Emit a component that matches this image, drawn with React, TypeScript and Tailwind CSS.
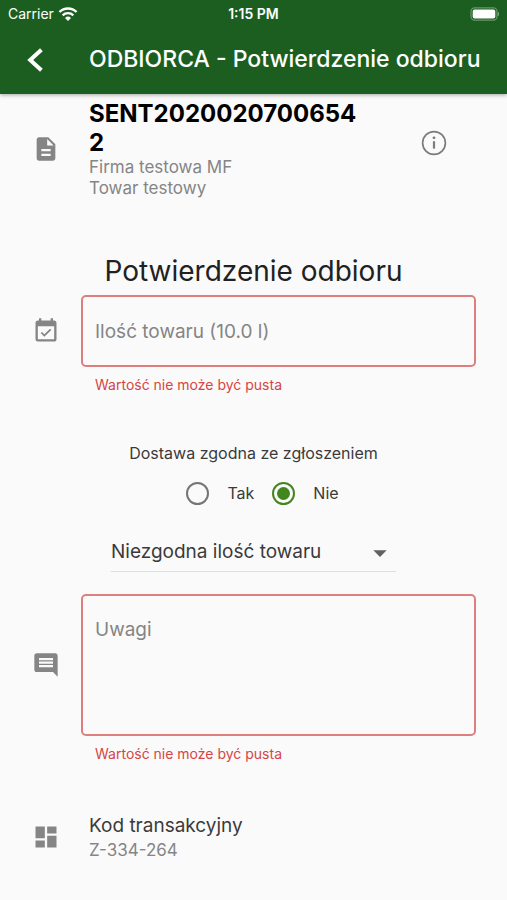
import React, { useState } from "react";
import clsx from "clsx";
import {
  MdArrowDropDown,
  MdComment,
  MdDashboard,
  MdDescription,
  MdEventAvailable,
} from "react-icons/md";

const StatusBar: React.FC = () => {
  return (
    <div className="grid h-7 grid-cols-3 items-center px-2 text-sm">
      <div className="flex items-center gap-1">
        <span>Carrier</span>
        <svg viewBox="0 0 18 14" className="h-4 w-5" fill="none">
          <path
            d="M1.3 5.2a11 11 0 0 1 15.4 0M4.2 8.2a6.9 6.9 0 0 1 9.6 0"
            stroke="currentColor"
            strokeWidth="2.1"
          />
          <path d="M9 13.2 6.3 10.5a3.9 3.9 0 0 1 5.4 0Z" fill="currentColor" />
        </svg>
      </div>
      <span className="text-center font-semibold">1:15 PM</span>
      <svg viewBox="0 0 29 14" className="h-[14px] w-[29px] justify-self-end">
        <rect
          x="1"
          y="0.8"
          width="26"
          height="12.4"
          rx="3.6"
          fill="none"
          stroke="#fff"
          strokeOpacity="0.35"
          strokeWidth="1.2"
        />
        <rect x="2.7" y="2.4" width="22.6" height="9.2" rx="2" fill="#fff" />
        <path d="M27.8 4.6c1.6.8 1.6 4 0 4.8Z" fill="#fff" fillOpacity="0.45" />
      </svg>
    </div>
  );
};

interface RowProps {
  icon?: React.ReactNode;
  className?: string;
  children?: React.ReactNode;
}

const Row: React.FC<RowProps> = ({ icon, className, children }) => {
  return (
    <div className={clsx("flex items-center", className)}>
      <div className="flex w-[57px] shrink-0 text-[28px] text-[#858585]">
        {icon}
      </div>
      {children}
    </div>
  );
};

const FieldError: React.FC<{ id: string }> = ({ id }) => {
  return (
    <p id={id} className="mt-2 pl-[95px] text-sm text-[#d64545]">
      Wartość nie może być pusta
    </p>
  );
};

interface RadioProps {
  label: string;
  checked: boolean;
  onChange: () => void;
}

const Radio: React.FC<RadioProps> = ({ label, checked, onChange }) => {
  return (
    <label className="flex items-center gap-[18px]">
      <input
        type="radio"
        name="zgodna"
        checked={checked}
        onChange={onChange}
        className="h-[23px] w-[23px] appearance-none rounded-full border-2 border-[#757575] bg-clip-content p-[3px] checked:border-[#43861f] checked:bg-[#43861f]"
      />
      {label}
    </label>
  );
};

export default function App() {
  const [zgodna, setZgodna] = useState(false);

  return (
    <div className="min-h-screen bg-[#fafafa] pb-10 font-['Inter',sans-serif] text-[#3a3a3a]">
      <header className="bg-[#1b5e20] text-white shadow-[0_1px_4px_rgba(0,0,0,0.35)]">
        <StatusBar />
        <div className="flex h-16 items-center pb-px pl-6">
          <button type="button" aria-label="Wstecz" className="w-[65px]">
            <svg viewBox="0 0 24 24" className="h-6 w-6" fill="none">
              <path
                d="M17.4 1.7 6.2 12l11.2 10.3"
                stroke="currentColor"
                strokeWidth="4"
              />
            </svg>
          </button>
          <h1 className="text-[23px] font-medium whitespace-nowrap">
            ODBIORCA - Potwierdzenie odbioru
          </h1>
        </div>
        <div className="h-0.5" />
      </header>

      <main className="pt-[5px]">
        <Row icon={<MdDescription />} className="pr-[60px] pl-8">
          <div className="min-w-0 flex-1 pr-14">
            <p className="text-2xl leading-[29px] font-bold break-all text-black">
              SENT20200207006542
            </p>
            <p className="text-[17px] leading-[21px] text-[#858585]">
              Firma testowa MF
            </p>
            <p className="text-[17px] leading-[21px] text-[#858585]">
              Towar testowy
            </p>
          </div>
          <button type="button" aria-label="Informacje" className="pb-3">
            <svg
              viewBox="0 0 26 26"
              className="h-[26px] w-[26px] text-[#7c7c7c]"
              fill="none"
            >
              <circle
                cx="13"
                cy="13"
                r="11.4"
                stroke="currentColor"
                strokeWidth="1.7"
              />
              <path d="M13 11.2v7.4" stroke="currentColor" strokeWidth="2.2" />
              <circle cx="13" cy="7.8" r="1.4" fill="currentColor" />
            </svg>
          </button>
        </Row>

        <h2 className="mt-[52px] text-center text-[28px] leading-10 text-[#212121]">
          Potwierdzenie odbioru
        </h2>
        <Row icon={<MdEventAvailable />} className="mt-1 pr-[31px] pl-8">
          <input
            type="text"
            aria-label="Ilość towaru"
            aria-describedby="ilosc-error"
            placeholder="Ilość towaru (10.0 l)"
            className="-ml-2 h-[72px] min-w-0 flex-1 rounded-[5px] border-2 border-[#de7f7f] px-3 text-[19px] placeholder:text-[#858585]"
          />
        </Row>
        <FieldError id="ilosc-error" />

        <fieldset className="mt-[46px] text-base">
          <legend className="w-full text-center">
            Dostawa zgodna ze zgłoszeniem
          </legend>
          <div className="mt-4 flex justify-center gap-[18px] pl-[18px]">
            <Radio
              label="Tak"
              checked={zgodna}
              onChange={() => setZgodna(true)}
            />
            <Radio
              label="Nie"
              checked={!zgodna}
              onChange={() => setZgodna(false)}
            />
          </div>
        </fieldset>

        <div className="relative mx-[111px] mt-7">
          <select
            aria-label="Rodzaj niezgodności"
            className="h-[39px] w-full appearance-none border-b border-[#dedede] text-[19px]"
          >
            <option>Niezgodna ilość towaru</option>
          </select>
          <MdArrowDropDown className="pointer-events-none absolute top-1 right-0 h-8 w-8 text-[#616161]" />
        </div>

        <Row icon={<MdComment />} className="mt-[22px] pr-[31px] pl-8">
          <textarea
            aria-label="Uwagi"
            aria-describedby="uwagi-error"
            placeholder="Uwagi"
            className="-ml-2 h-[142px] min-w-0 flex-1 resize-none rounded-[5px] border-2 border-[#de7f7f] px-3 py-5 text-[19px] placeholder:text-[#858585]"
          />
        </Row>
        <FieldError id="uwagi-error" />

        <Row icon={<MdDashboard />} className="mt-12 pr-8 pl-8">
          <div>
            <p className="text-[19px] leading-7">Kod transakcyjny</p>
            <p className="text-[17px] leading-[21px] text-[#858585]">
              Z-334-264
            </p>
          </div>
        </Row>
      </main>
    </div>
  );
}
